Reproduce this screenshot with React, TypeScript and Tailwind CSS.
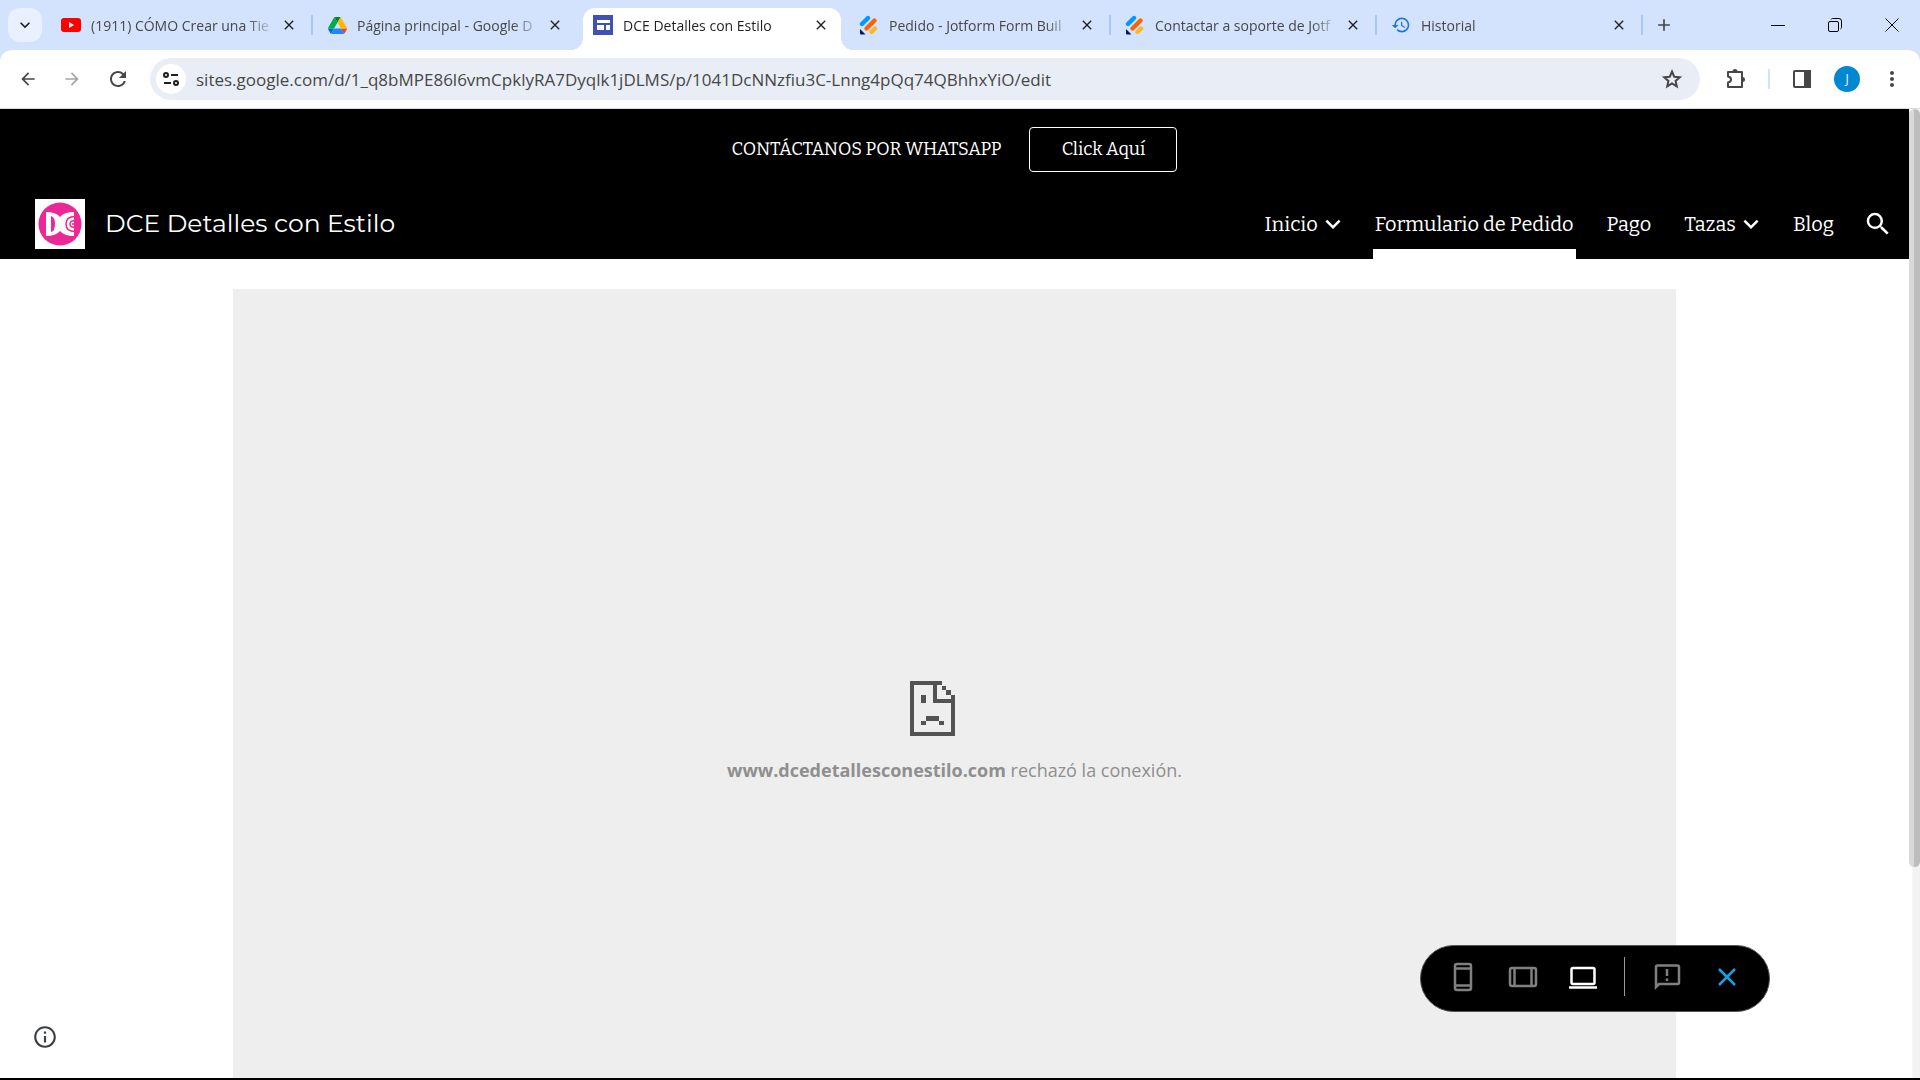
import type { ReactNode } from 'react';
import { MdArrowBack, MdArrowForward, MdClose, MdExpandMore, MdHistory, MdInfoOutline, MdMoreVert, MdRefresh, MdSearch, MdAdd } from 'react-icons/md';

interface TabData {
  title: string;
  icon: ReactNode;
  active?: boolean;
  separator?: boolean;
}

function YoutubeIcon() {
  return (
    <svg viewBox="0 0 20 14" className="h-[14px] w-5">
      <rect width="20" height="14" rx="3" fill="#f00" />
      <path d="M8 4v6l5-3z" fill="#fff" />
    </svg>
  );
}

function DriveIcon() {
  return (
    <svg viewBox="0 0 87.3 78" className="h-[17px] w-[19px]">
      <path d="m6.6 66.85 3.85 6.65c.8 1.4 1.95 2.5 3.3 3.3l13.75-23.8h-27.5c0 1.55.4 3.1 1.2 4.5z" fill="#0066da" />
      <path d="m43.65 25-13.75-23.8c-1.35.8-2.5 1.9-3.3 3.3l-25.4 44a9.06 9.06 0 0 0 -1.2 4.5h27.5z" fill="#00ac47" />
      <path d="m73.55 76.8c1.35-.8 2.5-1.9 3.3-3.3l1.6-2.75 7.65-13.25c.8-1.4 1.2-2.95 1.2-4.5h-27.5l5.85 11.5z" fill="#ea4335" />
      <path d="m43.65 25 13.75-23.8c-1.35-.8-2.9-1.2-4.5-1.2h-18.5c-1.6 0-3.15.45-4.5 1.2z" fill="#00832d" />
      <path d="m59.8 53h-32.3l-13.75 23.8c1.35.8 2.9 1.2 4.5 1.2h50.8c1.6 0 3.15-.45 4.5-1.2z" fill="#2684fc" />
      <path d="m73.4 26.5-12.7-22c-.8-1.4-1.95-2.5-3.3-3.3l-13.75 23.8 16.15 28h27.45c0-1.55-.4-3.1-1.2-4.5z" fill="#ffba00" />
    </svg>
  );
}

function SitesIcon() {
  return (
    <svg viewBox="0 0 20 20" className="size-5">
      <path fill="#3f51b5" d="M0 0h20v20H0z" />
      <path fill="#fff" d="M4 5h13v3H4zM4 10h7v5H4zM13 10h4v5h-4z" />
    </svg>
  );
}

function JotformIcon() {
  return (
    <svg viewBox="0 0 20 20" className="size-5" strokeLinecap="round" strokeWidth="4.4">
      <path d="M3 9 9 3" stroke="#0099ff" />
      <path d="M7.500 13.500 15.500 5.500" stroke="#ff6100" />
      <path d="M12.500 17 16 13.500" stroke="#ffb629" />
      <path d="M1 14v4.500q0 1 1 1h4.500z" fill="#0a1551" />
    </svg>
  );
}

const tabs: TabData[] = [
  { title: '(1911) CÓMO Crear una Tie', icon: <YoutubeIcon />, separator: true },
  { title: 'Página principal - Google D', icon: <DriveIcon /> },
  { title: 'DCE Detalles con Estilo', icon: <SitesIcon />, active: true },
  { title: 'Pedido - Jotform Form Buil', icon: <JotformIcon />, separator: true },
  { title: 'Contactar a soporte de Jotf', icon: <JotformIcon />, separator: true },
  { title: 'Historial', icon: <MdHistory className="size-5 text-[#1a73e8]" />, separator: true },
];

function Tab({ title, icon, active, separator }: TabData) {
  return (
    <div className="relative flex h-full w-[266px] min-w-0 items-end px-1">
      <div className={`relative flex h-[42px] w-full items-center pr-[10px] pb-2 pl-[10px] ${active ? 'rounded-t-xl bg-white text-[#1f1f1f]' : 'text-[#474747]'}`}>
        {active && (
          <>
            <span className="absolute bottom-0 -left-3 size-3 bg-[radial-gradient(circle_at_top_left,transparent_12px,white_12px)]" />
            <span className="absolute -right-3 bottom-0 size-3 bg-[radial-gradient(circle_at_top_right,transparent_12px,white_12px)]" />
          </>
        )}
        <span className="flex w-5 shrink-0 justify-center">{icon}</span>
        <span className="ml-[10px] min-w-0 flex-1 overflow-hidden pt-[2px] text-sm whitespace-nowrap [mask-image:linear-gradient(to_right,black_85%,transparent)]">{title}</span>
        <button aria-label={`Cerrar ${title}`} className="ml-1 flex size-5 shrink-0 items-center justify-center text-[#1f1f1f]">
          <MdClose className="size-4" />
        </button>
      </div>
      {separator && <span className="absolute top-[15px] right-0 h-5 w-[2px] bg-[#a8c7fa]" />}
    </div>
  );
}

function TabStrip() {
  return (
    <div className="flex h-[50px] items-stretch bg-[#d3e3fd]">
      <div className="w-[47px] shrink-0 pt-2 pl-2">
        <button aria-label="Buscar pestañas" className="flex size-[34px] items-center justify-center rounded-xl bg-[#e9f1fe]">
          <MdExpandMore className="size-5 text-[#1f1f1f]" />
        </button>
      </div>
      {tabs.map((tab) => (
        <Tab key={tab.title} {...tab} />
      ))}
      <button aria-label="Nueva pestaña" className="ml-[11px] w-6 shrink-0">
        <MdAdd className="size-5 text-[#474747]" />
      </button>
      <div className="ml-auto flex shrink-0">
        <button aria-label="Minimizar" className="flex w-[57px] items-center justify-center">
          <svg viewBox="0 0 14 14" className="size-[14px]" stroke="#000">
            <path d="M0 7.500h14" />
          </svg>
        </button>
        <button aria-label="Restaurar" className="flex w-[57px] items-center justify-center">
          <svg viewBox="0 0 14 14" className="size-[14px]" fill="none" stroke="#000">
            <rect x="0.500" y="3.500" width="10" height="10" rx="1.500" />
            <path d="M3 1.500q.5-1 1.500-1H11q2.500 0 2.500 2.500v6.500q0 1-1 1.500" />
          </svg>
        </button>
        <button aria-label="Cerrar" className="flex w-[57px] items-center justify-center">
          <svg viewBox="0 0 14 14" className="size-[14px]" stroke="#000">
            <path d="m.5.5 13 13M13.500.5l-13 13" />
          </svg>
        </button>
      </div>
    </div>
  );
}

function AddressBar() {
  return (
    <div className="bg-[#d3e3fd]">
      <div className="flex h-[59px] items-center rounded-t-xl border-b border-[#dadce0] bg-white pr-4 pl-[18px] text-[#474747]">
        <button aria-label="Atrás" className="mr-6">
          <MdArrowBack className="size-5" />
        </button>
        <button aria-label="Adelante" className="mr-6 text-[#a6a6a6]">
          <MdArrowForward className="size-5" />
        </button>
        <button aria-label="Volver a cargar" className="mr-5">
          <MdRefresh className="size-6" />
        </button>
        <div className="flex h-[42px] flex-1 items-center rounded-full bg-[#e9eef6] pr-4 pl-[6px]">
          <button aria-label="Información del sitio" className="flex size-[30px] shrink-0 items-center justify-center rounded-full bg-white">
            <svg viewBox="0 0 16 16" className="size-4" fill="none" stroke="#1f1f1f" strokeWidth="2">
              <circle cx="3" cy="4" r="2" />
              <path d="M8 4h7M1 12h7" />
              <circle cx="13" cy="12" r="2" />
            </svg>
          </button>
          <input
            aria-label="Dirección"
            className="ml-[10px] min-w-0 flex-1 bg-transparent pt-[2px] text-[17px] outline-none"
            defaultValue="sites.google.com/d/1_q8bMPE86l6vmCpklyRA7Dyqlk1jDLMS/p/1041DcNNzfiu3C-Lnng4pQq74QBhhxYiO/edit"
          />
          <button aria-label="Añadir a marcadores">
            <svg viewBox="0 0 24 24" className="size-6" fill="none" stroke="currentColor" strokeWidth="2">
              <path d="m12 4.500 2.200 5.200 5.600.5-4.200 3.700 1.200 5.500-4.800-2.900-4.800 2.900 1.200-5.500-4.200-3.700 5.600-.5z" />
            </svg>
          </button>
        </div>
        <button aria-label="Extensiones" className="ml-6">
          <svg viewBox="0 0 24 24" className="size-6" fill="none" stroke="currentColor" strokeWidth="2">
            <path d="M4 5h14v15H4v-4.500q3-.5 3-3t-3-3z" strokeLinejoin="round" />
            <path d="M8.500 4.500a2.500 2.500 0 0 1 5 0zM18.500 10a2.500 2.500 0 0 1 0 5z" fill="currentColor" stroke="none" />
          </svg>
        </button>
        <span className="ml-5 h-5 w-[2px] bg-[#d3e3fd]" />
        <button aria-label="Panel lateral" className="ml-5">
          <svg viewBox="0 0 24 24" className="size-6" fill="none" stroke="currentColor" strokeWidth="2">
            <rect x="4" y="4" width="16" height="16" rx="1" />
            <path d="M15 4h5v16h-5z" fill="currentColor" />
          </svg>
        </button>
        <button aria-label="Perfil" className="ml-5 size-[26px] rounded-full bg-[#0288d1] text-xs text-white">
          J
        </button>
        <button aria-label="Menú" className="ml-5">
          <MdMoreVert className="size-6" />
        </button>
      </div>
    </div>
  );
}

function Logo() {
  return (
    <svg viewBox="0 0 50 50" className="size-[50px]">
      <path fill="#fff" d="M0 0h50v50H0z" />
      <circle cx="25" cy="25" r="21.500" fill="#ec2796" />
      <path d="M11 13q10 0 14 5 4-5 14-5v24q-10 0-14-5-4 5-14 5z" fill="#fff" />
      <path d="M16 17v16q4-1 4-8t-4-8z" fill="#ec2796" />
      <path d="M40 17.500q-9 0-9 7.500t9 7.500" fill="none" stroke="#ec2796" strokeWidth="1.500" />
      <path d="M40 21.500q-5 0-5 3.500t5 3.500M40 25h-3" fill="none" stroke="#ec2796" strokeWidth="1.500" />
    </svg>
  );
}

function SiteHeader() {
  return (
    <header className="bg-black font-['Bitter','DejaVu_Serif_Condensed','DejaVu_Serif',serif] text-white">
      <div className="flex h-20 items-center justify-center gap-7">
        <span className="text-lg">CONTÁCTANOS POR WHATSAPP</span>
        <a href="#whatsapp" className="flex h-[45px] w-[148px] items-center justify-center rounded border border-white text-lg">
          Click Aquí
        </a>
      </div>
      <div className="flex h-[70px] items-center justify-between pr-4 pl-[35px]">
        <a href="#inicio" className="flex items-center gap-5">
          <Logo />
          <span className="font-['Montserrat','Inter',sans-serif] text-[25px]">DCE Detalles con Estilo</span>
        </a>
        <nav className="flex h-full items-center gap-[33px] text-xl">
          <a href="#inicio" className="-mr-[6px] flex items-center">
            Inicio
            <MdExpandMore className="size-[30px]" />
          </a>
          <a href="#formulario" className="relative flex h-full items-center">
            Formulario de Pedido
            <span className="absolute -right-[2px] bottom-0 -left-[2px] h-[10px] bg-white" />
          </a>
          <a href="#pago">Pago</a>
          <a href="#tazas" className="-mr-[6px] flex items-center">
            Tazas
            <MdExpandMore className="size-[30px]" />
          </a>
          <a href="#blog">Blog</a>
          <button aria-label="Buscar" className="-ml-1">
            <MdSearch className="size-[30px]" />
          </button>
        </nav>
      </div>
    </header>
  );
}

function SadPage() {
  return (
    <svg viewBox="0 0 45 55" className="h-[55px] w-[45px]" fill="#535353">
      <path fillRule="evenodd" d="M0 0h32v5h4v4h5v5h4v41H0zM4 4v47h37V22H23V4zM27 4v14h14v-4h-5V9h-4V4z" />
      <path d="M11 14h5v8h-5zM16 35h13v5H16zM11 40h5v4h-5zM29 40h5v4h-5z" />
    </svg>
  );
}

function PreviewToolbar() {
  return (
    <div className="absolute right-[139px] bottom-[66px] flex h-[67px] w-[350px] items-center rounded-full border border-[#555] bg-black pb-1 pl-[27px] text-[#808080]">
      <button aria-label="Teléfono" className="mr-[30px]">
        <svg viewBox="0 0 30 30" className="size-[30px]" fill="none" stroke="currentColor" strokeWidth="2.500">
          <rect x="7" y="2" width="16" height="26" rx="2" />
          <path d="M7 6.500h16M7 23.500h16" />
        </svg>
      </button>
      <button aria-label="Tableta" className="mr-[30px]">
        <svg viewBox="0 0 30 30" className="size-[30px]" fill="none" stroke="currentColor" strokeWidth="2.500">
          <rect x="2" y="6" width="26" height="18" rx="2" />
          <path d="M6.500 6v18M23.500 6v18" />
        </svg>
      </button>
      <button aria-label="Pantalla grande" className="mr-[26px] text-white">
        <svg viewBox="0 0 30 30" className="size-[30px]" fill="none" stroke="currentColor" strokeWidth="2.500">
          <rect x="3.500" y="6" width="23" height="16" rx="1.500" />
          <path d="M1 25.500h28" />
        </svg>
      </button>
      <span className="mr-[27px] h-[39px] w-px bg-[#9a9a9a]" />
      <button aria-label="Enviar comentarios" className="mr-[30px]">
        <svg viewBox="0 0 30 30" className="size-[30px]" fill="none" stroke="currentColor" strokeWidth="2.500">
          <path d="M4 25V5q0-1.500 1.500-1.500h20Q27 3.500 27 5v15.500q0 1.500-1.500 1.500H7z" />
          <path d="M15 7v7M15 16.500V19" />
        </svg>
      </button>
      <button aria-label="Salir de la vista previa" className="text-[#1a9fe0]">
        <svg viewBox="0 0 30 30" className="size-[30px]" stroke="currentColor" strokeWidth="2.500">
          <path d="m7 7 16 16M23 7 7 23" />
        </svg>
      </button>
    </div>
  );
}

function App() {
  return (
    <div className="flex min-h-screen flex-col border-b-2 border-black bg-white font-['Segoe_UI','Open_Sans',sans-serif]">
      <TabStrip />
      <AddressBar />
      <div className="flex flex-1">
        <div className="relative flex min-w-0 flex-1 flex-col">
          <SiteHeader />
          <main className="flex flex-1 justify-center pt-[30px]">
            <section className="flex w-[1443px] flex-col items-center justify-center bg-[#eee] pt-[98px]">
              <div className="flex w-[90px]">
                <SadPage />
              </div>
              <p className="mt-5 text-lg text-[#8f8f8f]">
                <strong>www.dcedetallesconestilo.com</strong> rechazó la conexión.
              </p>
            </section>
          </main>
          <button aria-label="Información de la página" className="absolute bottom-7 left-8 text-[#3c4043]">
            <MdInfoOutline className="size-[26px]" />
          </button>
          <PreviewToolbar />
        </div>
        <div className="w-[11px] bg-linear-to-r from-white from-25% to-[#f3f3f3] to-35%">
          <div className="h-[758px] rounded-full border-l-[5px] border-[#d9d9d9] bg-[#bdbdbd]" />
        </div>
      </div>
    </div>
  );
}

export default App;
